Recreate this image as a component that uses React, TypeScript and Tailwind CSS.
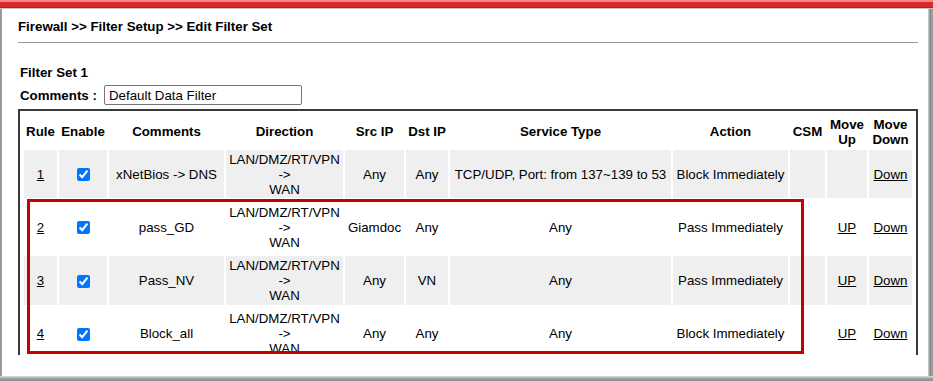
import React from "react";

type Rule = {
  no: number;
  comment: string;
  src: string;
  dst: string;
  service: string;
  action: string;
  up: boolean;
  h: string;
  shaded: boolean;
};

const rules: Rule[] = [
  { no: 1, comment: "xNetBios -> DNS", src: "Any", dst: "Any", service: "TCP/UDP, Port: from 137~139 to 53", action: "Block Immediately", up: false, h: "h-[48px]", shaded: true },
  { no: 2, comment: "pass_GD", src: "Giamdoc", dst: "Any", service: "Any", action: "Pass Immediately", up: true, h: "h-[54px]", shaded: false },
  { no: 3, comment: "Pass_NV", src: "Any", dst: "VN", service: "Any", action: "Pass Immediately", up: true, h: "h-[49px]", shaded: true },
  { no: 4, comment: "Block_all", src: "Any", dst: "Any", service: "Any", action: "Block Immediately", up: true, h: "h-[53px]", shaded: false },
];

export default function App() {
  return (
    <div className="relative w-[933px] h-[381px] flex flex-col bg-white overflow-hidden font-['Liberation_Sans',Arial,sans-serif] text-[13.3px] leading-[15px] text-black">
      {/* red title strip */}
      <div className="h-[2px] bg-[#f08a8a]" />
      <div className="h-[5px] bg-[#da2a2a]" />
      <div className="h-[1px] bg-[#b82020]" />
      <div className="h-[1px] bg-[#c4c4c4]" />

      <div className="flex flex-1 min-h-0">
        <div className="w-[2px] bg-[#9a9a9a]" />
        <main className="flex-1 pl-4 pt-[10px]">
          <div className="font-bold">Firewall &gt;&gt; Filter Setup &gt;&gt; Edit Filter Set</div>
          <div className="w-[900px] h-px bg-[#9a9a9a] mt-[8px]" />

          <div className="pl-[2px] mt-[22px] font-bold">Filter Set 1</div>
          <div className="pl-[2px] mt-[5px] h-[20px] flex items-center">
            <span className="w-[84px] font-bold">Comments :</span>
            <div className="w-[198px] h-[20px] border border-[#767676] rounded-[2px] pl-[4px] flex items-center">
              Default Data Filter
            </div>
          </div>

          <div className="mt-[4px] w-[900px] h-[246px] border-l-2 border-t-2 border-r-2 border-[#3a3a3a] p-[2px] pb-0 overflow-hidden">
            <table className="w-full table-fixed border-separate border-spacing-[2px] text-center">
              <colgroup>
                <col className="w-[33px]" />
                <col className="w-[48px]" />
                <col className="w-[115px]" />
                <col className="w-[117px]" />
                <col className="w-[59px]" />
                <col className="w-[42px]" />
                <col className="w-[221px]" />
                <col className="w-[115px]" />
                <col className="w-[35px]" />
                <col className="w-[40px]" />
                <col className="w-[43px]" />
              </colgroup>
              <thead>
                <tr className="h-[33px] font-bold">
                  <td className="p-0">Rule</td>
                  <td className="p-0">Enable</td>
                  <td className="p-0">Comments</td>
                  <td className="p-0">Direction</td>
                  <td className="p-0">Src IP</td>
                  <td className="p-0">Dst IP</td>
                  <td className="p-0">Service Type</td>
                  <td className="p-0">Action</td>
                  <td className="p-0">CSM</td>
                  <td className="p-0">Move<br />Up</td>
                  <td className="p-0">Move<br />Down</td>
                </tr>
              </thead>
              <tbody>
                {rules.map((r) => {
                  const cell = r.shaded ? "p-0 bg-[#efefef]" : "p-0";
                  return (
                    <tr key={r.no} className={r.h}>
                      <td className={cell}><a className="underline">{r.no}</a></td>
                      <td className={cell}>
                        <input type="checkbox" defaultChecked className="align-middle m-0 w-[13px] h-[13px]" />
                      </td>
                      <td className={cell}>{r.comment}</td>
                      <td className={cell}>LAN/DMZ/RT/VPN<br />-&gt;<br />WAN</td>
                      <td className={cell}>{r.src}</td>
                      <td className={cell}>{r.dst}</td>
                      <td className={cell}>{r.service}</td>
                      <td className={cell}>{r.action}</td>
                      <td className={cell}></td>
                      <td className={cell}>{r.up && <a className="underline">UP</a>}</td>
                      <td className={cell}><a className="underline">Down</a></td>
                    </tr>
                  );
                })}
              </tbody>
            </table>
          </div>
        </main>
        <div className="w-[5px] bg-[linear-gradient(to_right,#d4d4d4,#8a8a8a_45%,#a6a6a6)]" />
      </div>

      <div className="h-[5px] bg-[linear-gradient(to_bottom,#e2e2e2,#a0a0a0_50%,#8a8a8a)]" />

      {/* highlight around the custom rules */}
      <div className="absolute left-[27px] top-[199px] w-[777px] h-[155px] border-[3px] border-[#c40000] pointer-events-none" />
    </div>
  );
}
